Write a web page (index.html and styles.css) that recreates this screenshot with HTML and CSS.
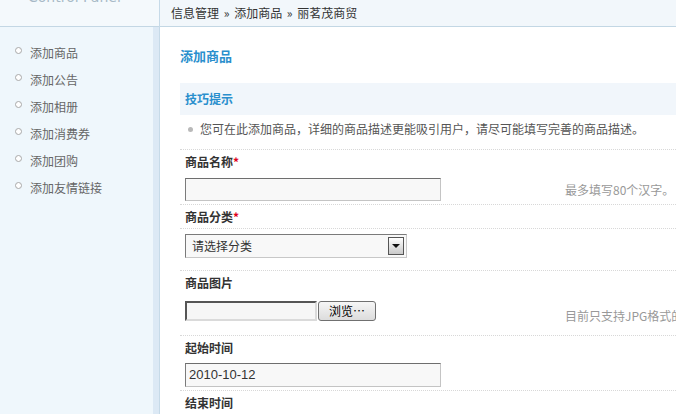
FILE: index.html
```html
<!DOCTYPE html>
<html lang="zh-CN">
<head>
<meta charset="utf-8">
<title>添加商品</title>
<link rel="stylesheet" href="styles.css">
</head>
<body>
<div class="page">
  <aside class="side">
    <div class="side-head"><span class="brand">Control Panel</span></div>
    <ul class="side-nav">
      <li><span class="ring"></span>添加商品</li>
      <li><span class="ring"></span>添加公告</li>
      <li><span class="ring"></span>添加相册</li>
      <li><span class="ring"></span>添加消费券</li>
      <li><span class="ring"></span>添加团购</li>
      <li><span class="ring"></span>添加友情链接</li>
    </ul>
  </aside>
  <main class="main">
    <div class="crumb">信息管理 <span class="sep">&raquo;</span> 添加商品 <span class="sep">&raquo;</span> 丽茗茂商贸</div>
    <div class="content">
      <h3 class="title">添加商品</h3>
      <div class="form">
        <div class="tip-head">技巧提示</div>
        <div class="tip-body"><span class="dot"></span>您可在此添加商品，详细的商品描述更能吸引用户，请尽可能填写完善的商品描述。</div>

        <div class="lbl">商品名称<em>*</em></div>
        <div class="field f-name">
          <div class="cell"><span class="txt w256"></span></div>
          <div class="hint">最多填写80个汉字。</div>
        </div>

        <div class="lbl">商品分类<em>*</em></div>
        <div class="field f-select bordered">
          <div class="cell">
            <div class="select"><span class="sel-text">请选择分类</span><span class="sel-btn"><span class="tri"></span></span></div>
          </div>
        </div>

        <div class="lbl">商品图片</div>
        <div class="field f-file">
          <div class="cell"><span class="filebox"></span><span class="browse">浏览…</span></div>
          <div class="hint hint-low">目前只支持JPG格式的图片</div>
        </div>

        <div class="lbl">起始时间</div>
        <div class="field f-date">
          <div class="cell"><span class="txt w256 date">2010-10-12</span></div>
        </div>

        <div class="lbl">结束时间</div>
        <div class="field f-date">
          <div class="cell"><span class="txt w256"></span></div>
        </div>
      </div>
    </div>
  </main>
</div>
</body>
</html>
```
FILE: styles.css
```css
* { box-sizing: border-box; }
html, body { margin: 0; padding: 0; }
body {
  font-family: "Noto Sans CJK SC", "Noto Sans", sans-serif;
  font-size: 12px;
  color: #333;
  background: #fff;
  overflow: hidden;
}
.page {
  display: flex;
  height: 100vh;
  overflow: hidden;
}
.side {
  width: 160px;
  flex: none;
  display: flex;
  flex-direction: column;
  border-right: 1px solid #c6dae8;
}
.side-head {
  height: 27px;
  flex: none;
  background: #f4f9fc;
  border-bottom: 1px solid #c3d7e4;
  overflow: hidden;
}
.brand {
  display: block;
  margin: -12px 0 0 28px;
  font-family: "DejaVu Sans", sans-serif;
  font-size: 14px;
  line-height: 18px;
  color: #a7b9c7;
}
.side-nav {
  flex: 1;
  margin: 0;
  padding: 12px 0 0 0;
  list-style: none;
  background: #eff7fc;
  border-right: 6px solid #dce9f5;
}
.side-nav li {
  display: flex;
  align-items: center;
  height: 27px;
  padding-left: 15px;
  color: #666;
  line-height: 18px;
}
.ring {
  width: 7px;
  height: 7px;
  border: 1px solid #a9a9a9;
  border-radius: 50%;
  margin-right: 8px;
  margin-top: -5px;
  background: #fff;
}
.main {
  flex: 1;
  min-width: 0;
  overflow: hidden;
}
.crumb {
  height: 27px;
  line-height: 26px;
  padding-left: 11px;
  background: #f2f7fb;
  border-bottom: 1px solid #c3d7e4;
  color: #333;
  white-space: nowrap;
}
.sep {
  margin: 0 2px;
}
.content {
  padding: 0 0 0 20px;
}
.title {
  margin: 0;
  padding: 20px 0 18px 0;
  font-size: 13px;
  line-height: 18px;
  font-weight: bold;
  color: #2a8fcd;
}
.form {
  width: 720px;
}
.tip-head {
  height: 32px;
  line-height: 32px;
  padding-left: 5px;
  background: #f1f6fb;
  color: #2a8fcd;
  font-weight: bold;
}
.tip-body {
  display: flex;
  align-items: center;
  padding: 5px 0 11px 8px;
  line-height: 18px;
  color: #555;
  white-space: nowrap;
}
.dot {
  width: 5px;
  height: 5px;
  border-radius: 50%;
  background: #b9b9b9;
  margin-right: 7px;
}
.lbl {
  border-top: 1px dotted #d8d8d8;
  padding: 3px 5px 2px;
  line-height: 18px;
  font-weight: bold;
  color: #333;
}
.lbl em {
  font-style: normal;
  color: #e0001b;
}
.field {
  display: flex;
  align-items: center;
}
.field.bordered {
  border-top: 1px dotted #d8d8d8;
}
.cell {
  width: 385px;
  padding-left: 5px;
  display: flex;
  align-items: center;
}
.hint {
  color: #999;
  white-space: nowrap;
  line-height: 18px;
}
.f-name { padding: 5px 0 3px; }
.f-select { padding: 5px 0 12px; }
.f-file { padding: 7px 0 10px; align-items: flex-start; }
.f-date { padding: 4px 0 3px; }
.hint-low { margin-top: 6px; }

.txt {
  display: block;
  height: 23px;
  background: #f8f8f8;
  border: 1px solid #c4c4c4;
  border-top-color: #6e6e6e;
  border-left-color: #7b7b7b;
  font-family: "Liberation Sans", Arial, sans-serif;
  font-size: 13px;
  line-height: 21px;
  padding-left: 3px;
  color: #333;
}
.f-date .txt { height: 24px; line-height: 22px; }
.w256 { width: 256px; }

.select {
  width: 222px;
  height: 24px;
  display: flex;
  align-items: center;
  justify-content: space-between;
  background: #f8f8f8;
  border: 1px solid #c8c8c8;
  border-top-color: #7a7a7a;
  border-left-color: #7a7a7a;
  padding: 0 2px 0 6px;
}
.sel-text {
  color: #333;
  line-height: 18px;
}
.sel-btn {
  width: 16px;
  height: 18px;
  border: 1px solid #555;
  background: linear-gradient(#ffffff, #c9c9c9);
  display: flex;
  align-items: center;
  justify-content: center;
}
.tri {
  width: 0;
  height: 0;
  border-left: 4px solid transparent;
  border-right: 4px solid transparent;
  border-top: 4px solid #111;
}
.filebox {
  display: block;
  width: 132px;
  height: 20px;
  background: #f6f6f6;
  border: 2px solid #dadada;
  border-top-color: #555;
  border-left-color: #555;
}
.browse {
  display: block;
  width: 58px;
  height: 20px;
  margin-left: 1px;
  border: 1px solid #707070;
  border-radius: 3px;
  background: linear-gradient(#f6f6f6, #dcdcdc);
  font-family: "Noto Sans CJK SC", sans-serif;
  font-size: 12px;
  line-height: 17px;
  text-align: center;
  color: #000;
}
```
